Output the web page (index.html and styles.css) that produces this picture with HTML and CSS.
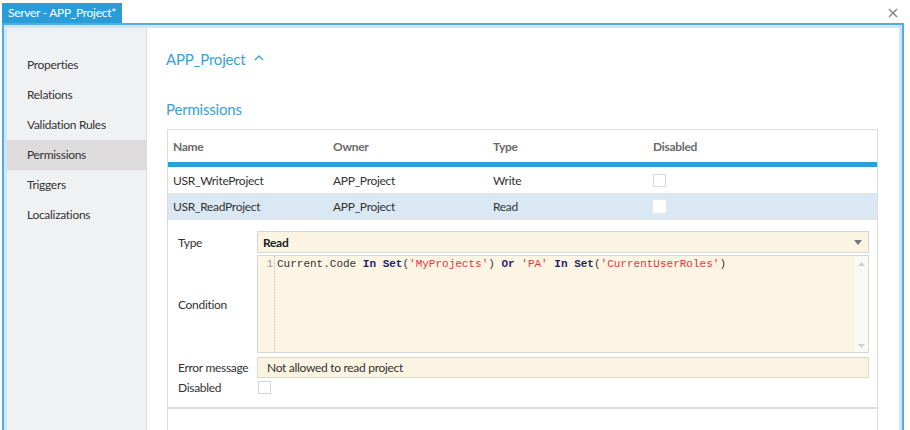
FILE: index.html
```html
<!DOCTYPE html>
<html lang="en">
<head>
<meta charset="utf-8">
<title>Server - APP_Project*</title>
<link rel="stylesheet" href="styles.css">
</head>
<body>
<div class="topbar">
  <div class="tab">Server - APP_Project*</div>
  <svg class="close" width="12" height="12" viewBox="0 0 12 12"><path d="M2 2 L10 10 M10 2 L2 10" stroke="#8c8c8c" stroke-width="1.6" fill="none"/></svg>
</div>
<div class="window">
  <nav class="sidebar">
    <div class="nav-item">Properties</div>
    <div class="nav-item">Relations</div>
    <div class="nav-item">Validation Rules</div>
    <div class="nav-item active">Permissions</div>
    <div class="nav-item">Triggers</div>
    <div class="nav-item">Localizations</div>
  </nav>
  <main class="content">
    <h1 class="title">APP_Project <svg class="caret" width="10" height="6" viewBox="0 0 10 6"><path d="M1 5 L5 1 L9 5" stroke="#3aa0d8" stroke-width="1.3" fill="none"/></svg></h1>
    <h2 class="section">Permissions</h2>
    <div class="table">
      <div class="row head">
        <div>Name</div><div>Owner</div><div>Type</div><div>Disabled</div>
      </div>
      <div class="bar"></div>
      <div class="row">
        <div>USR_WriteProject</div><div>APP_Project</div><div>Write</div><div><span class="check"></span></div>
      </div>
      <div class="row selected">
        <div>USR_ReadProject</div><div>APP_Project</div><div>Read</div><div><span class="check white"></span></div>
      </div>
      <div class="detail">
        <div class="frow r-type">
          <div class="label">Type</div>
          <div class="select"><span>Read</span><svg width="8" height="5" viewBox="0 0 8 5"><path d="M0 0 L8 0 L4 5 Z" fill="#777"/></svg></div>
        </div>
        <div class="frow r-cond">
          <div class="label">Condition</div>
          <div class="editor">
            <div class="gutter">1</div>
            <div class="code"><span class="p">Current.Code </span><span class="k">In</span> <span class="k">Set</span><span class="p">(</span><span class="s">'MyProjects'</span><span class="p">) </span><span class="k">Or</span> <span class="s">'PA'</span> <span class="k">In</span> <span class="k">Set</span><span class="p">(</span><span class="s">'CurrentUserRoles'</span><span class="p">)</span></div>
            <div class="vscroll">
              <svg width="7" height="4" viewBox="0 0 7 4"><path d="M0 4 L7 4 L3.5 0 Z" fill="#d0d0d0"/></svg>
              <svg width="7" height="4" viewBox="0 0 7 4"><path d="M0 0 L7 0 L3.5 4 Z" fill="#d0d0d0"/></svg>
            </div>
          </div>
        </div>
        <div class="frow r-err">
          <div class="label">Error message</div>
          <div class="input">Not allowed to read project</div>
        </div>
        <div class="frow r-dis">
          <div class="label">Disabled</div>
          <div class="field"><span class="check box"></span></div>
        </div>
      </div>
      <div class="rest"></div>
    </div>
  </main>
</div>
</body>
</html>
```

FILE: styles.css
```css
html, body {
  margin: 0;
  padding: 0;
  background: #ffffff;
  overflow: hidden;
}
body {
  width: 910px;
  height: 430px;
  font-family: Lato, "Open Sans", sans-serif;
  font-size: 12px;
  letter-spacing: -0.3px;
  color: #333333;
}
.topbar {
  height: 23px;
  display: flex;
  align-items: flex-end;
  justify-content: space-between;
  padding: 0 6px 0 2px;
}
.tab {
  height: 20px;
  line-height: 20px;
  padding: 0 6px;
  background: #2a9dd9;
  color: #ffffff;
  font-size: 12px;
}
.close {
  align-self: center;
  margin-top: 3px;
  margin-right: 5px;
}
.window {
  margin-left: 2px;
  width: 892px;
  height: 403px;
  border: 2px solid #4eace2;
  border-bottom: none;
  padding: 3px 3px 0 3px;
  box-shadow: inset 0 0 0 3px #cde7f7;
  display: flex;
}
.sidebar {
  width: 139px;
  flex: none;
  background: #f0f1f3;
  border-right: 1px solid #dedede;
  padding-top: 22px;
}
.nav-item {
  height: 30px;
  line-height: 30px;
  padding-left: 20px;
  color: #333;
}
.nav-item.active {
  background: #dddbdc;
}
.content {
  flex: 1;
  padding: 0 21px 0 20px;
  background: #ffffff;
}
.title {
  margin: 21px 0 0 -1px;
  font-size: 15px;
  line-height: 20px;
  font-weight: normal;
  letter-spacing: -0.2px;
  color: #3aa0d8;
  display: flex;
  align-items: center;
  gap: 9px;
}
.caret {
  margin-top: -2px;
}
.section {
  margin: 30px 0 0 -1px;
  font-size: 15px;
  line-height: 20px;
  font-weight: normal;
  letter-spacing: -0.2px;
  color: #3aa0d8;
}
.table {
  margin-top: 10px;
  border: 1px solid #dcdcdc;
  border-bottom: none;
}
.row {
  display: grid;
  grid-template-columns: 160px 160px 160px 1fr;
  height: 26px;
  align-items: center;
  border-bottom: 1px solid #e4e4e4;
}
.row > div {
  padding-left: 5px;
}
.row.head {
  height: 32px;
  border-bottom: none;
  font-weight: bold;
  color: #6a6a6a;
}
.bar {
  height: 5px;
  background: #2a9fda;
}
.row.selected {
  height: 25px;
  background: #d9e8f3;
}
.check {
  display: block;
  width: 11px;
  height: 11px;
  border: 1px solid #d8d8d8;
  background: #ffffff;
}
.check.white {
  border-color: #ffffff;
}
.detail {
  padding: 11px 8px 13px 10px;
  border-bottom: 2px solid #dddddd;
}
.frow {
  display: flex;
  align-items: center;
}
.frow .label {
  width: 79px;
  flex: none;
}
.frow > :last-child {
  flex: 1;
}
.r-type { height: 22px; }
.r-cond { height: 98px; margin-top: 2px; }
.r-err { height: 21px; margin-top: 4px; }
.r-dis { height: 13px; margin-top: 3px; }
.select {
  height: 20px;
  border: 1px solid #d6d6d6;
  background: #fcf4e2;
  display: flex;
  align-items: center;
  justify-content: space-between;
  padding: 0 6px 0 5px;
  font-weight: bold;
  color: #222;
}
.editor {
  height: 96px;
  border: 1px solid #d6d6d6;
  background: #fdf5e4;
  display: flex;
}
.gutter {
  width: 17px;
  box-sizing: border-box;
  border-right: 1px dotted #c8c0b0;
  text-align: right;
  padding-right: 1px;
  font-family: "Liberation Mono", monospace;
  font-size: 11px;
  letter-spacing: 0;
  line-height: 16px;
  color: #9a9a9a;
}
.code {
  flex: 1;
  padding-left: 2px;
  font-family: "Liberation Mono", monospace;
  font-size: 11px;
  letter-spacing: 0;
  line-height: 16px;
  white-space: pre;
}
.code .p { color: #333333; }
.code .k { color: #1f1f6e; font-weight: bold; }
.code .s { color: #e8323d; }
.vscroll {
  width: 13px;
  background: #fbf9f4;
  display: flex;
  flex-direction: column;
  justify-content: space-between;
  align-items: center;
  padding: 6px 0 4px;
}
.input {
  height: 19px;
  border: 1px solid #e0d8c8;
  background: #fcf4e2;
  line-height: 19px;
  padding-left: 9px;
  color: #333;
}
.field {
  display: flex;
  align-items: center;
  padding-left: 1px;
}
.check.box {
  width: 11px;
  height: 11px;
  border: 1px solid #d4d4d4;
}
.rest {
  height: 40px;
}
```
